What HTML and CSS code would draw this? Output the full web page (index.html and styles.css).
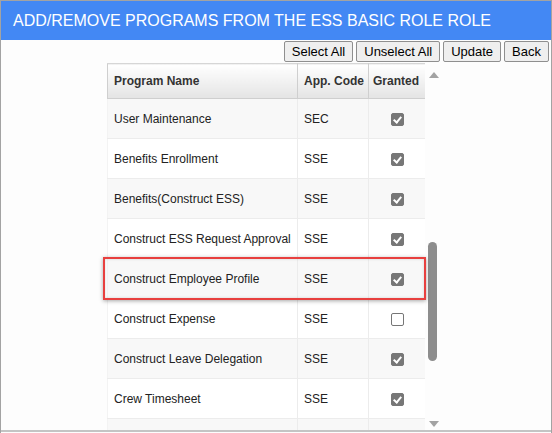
FILE: index.html
```html
<!DOCTYPE html>
<html>
<head>
<meta charset="utf-8">
<link rel="stylesheet" href="styles.css">
</head>
<body>
<div class="frame">
  <div class="titlebar">ADD/REMOVE PROGRAMS FROM THE ESS BASIC ROLE ROLE</div>
  <div class="toolbar">
    <button class="btn">Select All</button>
    <button class="btn">Unselect All</button>
    <button class="btn">Update</button>
    <button class="btn">Back</button>
  </div>
  <div class="gridwrap">
    <div class="grid">
      <table class="tbl">
        <thead>
          <tr><th class="c1">Program Name</th><th class="c2">App. Code</th><th class="c3">Granted</th></tr>
        </thead>
        <tbody>
          <tr><td>User Maintenance</td><td>SEC</td><td class="cb"><span class="box on"></span></td></tr>
          <tr><td>Benefits Enrollment</td><td>SSE</td><td class="cb"><span class="box on"></span></td></tr>
          <tr><td>Benefits(Construct ESS)</td><td>SSE</td><td class="cb"><span class="box on"></span></td></tr>
          <tr><td>Construct ESS Request Approval</td><td>SSE</td><td class="cb"><span class="box on"></span></td></tr>
          <tr><td>Construct Employee Profile</td><td>SSE</td><td class="cb"><span class="box on"></span></td></tr>
          <tr><td>Construct Expense</td><td>SSE</td><td class="cb"><span class="box"></span></td></tr>
          <tr><td>Construct Leave Delegation</td><td>SSE</td><td class="cb"><span class="box on"></span></td></tr>
          <tr><td>Crew Timesheet</td><td>SSE</td><td class="cb"><span class="box on"></span></td></tr>
          <tr><td></td><td></td><td class="cb"></td></tr>
        </tbody>
      </table>
    </div>
    <div class="scrollbar">
      <span class="arrow up"></span>
      <span class="thumb"></span>
      <span class="arrow down"></span>
    </div>
  </div>
  <div class="highlight"></div>
</div>
</body>
</html>
```
FILE: styles.css
```css
* { box-sizing: border-box; }
html, body { margin: 0; padding: 0; background: #fff; }
body { font-family: "Liberation Sans", Arial, sans-serif; }

.frame {
  position: relative;
  width: 552px;
  height: 433px;
  border: 1px solid #a3a3a3;
  border-bottom: none;
  background: #fdfdfd;
  overflow: hidden;
  display: flex;
  flex-direction: column;
}

.titlebar {
  height: 39px;
  background: #4388f4;
  color: #fff;
  font-size: 16px;
  line-height: 39px;
  padding-left: 12px;
  white-space: nowrap;
  flex: none;
}

.toolbar {
  display: flex;
  justify-content: flex-end;
  gap: 3px;
  padding: 1px 2px 0 0;
  height: 23px;
  flex: none;
}

.btn {
  font-family: "Liberation Sans", Arial, sans-serif;
  font-size: 13px;
  color: #000;
  height: 21px;
  padding: 0 7px;
  background: #efefef;
  border: 1px solid #8f8f8f;
  border-radius: 2px;
  line-height: 19px;
}

.gridwrap {
  display: flex;
  flex: 1;
  min-height: 0;
  padding-left: 106px;
  border-bottom: 2px solid #c4c4c4;
  margin-bottom: 1px;
}

.grid {
  width: 318px;
  overflow: hidden;
}

.tbl {
  width: 318px;
  border-collapse: collapse;
  table-layout: fixed;
  font-size: 12px;
  color: #222;
}

.tbl th {
  height: 35px;
  font-weight: bold;
  text-align: left;
  padding: 0 4px 0 6px;
  color: #333;
  white-space: nowrap;
  background: linear-gradient(#ffffff, #e4e4e4);
  border: 1px solid #cfcfcf;
  border-top: 1px solid #d6d6d6;
}
.tbl th.c1 { width: 190px; }
.tbl th.c2 { width: 71px; }
.tbl th.c3 { width: 57px; padding: 0 4px; }

.tbl td {
  height: 40px;
  padding: 0 6px;
  border-right: 1px solid #ececec;
  border-bottom: 1px solid #ececec;
  white-space: nowrap;
  overflow: hidden;
}
.tbl td:first-child { border-left: 1px solid #f3f3f3; }
.tbl tbody tr:nth-child(odd) td { background: #f8f8f8; }
.tbl tbody tr:nth-child(even) td { background: #ffffff; }

.tbl td.cb { text-align: center; padding: 0; }

.box {
  display: inline-block;
  width: 13px;
  height: 13px;
  border: 1px solid #767676;
  border-radius: 2px;
  background: #fff;
  vertical-align: middle;
  position: relative;
  margin-left: 1px;
}
.box.on {
  background: #777;
  border-color: #777;
}
.box.on::after {
  content: "";
  position: absolute;
  left: 3px;
  top: 1px;
  width: 3px;
  height: 6px;
  border: solid #fff;
  border-width: 0 2px 2px 0;
  transform: rotate(40deg);
}

.scrollbar {
  position: relative;
  width: 17px;
  flex: none;
}
.arrow {
  position: absolute;
  left: 4px;
  width: 0;
  height: 0;
  border-left: 5px solid transparent;
  border-right: 5px solid transparent;
}
.arrow.up { top: 9px; border-bottom: 6px solid #a3a3a3; }
.arrow.down { bottom: 3px; border-top: 6px solid #a3a3a3; }
.thumb {
  position: absolute;
  left: 3px;
  top: 179px;
  width: 9px;
  height: 119px;
  border-radius: 5px;
  background: #8d8d8d;
}

.highlight {
  position: absolute;
  left: 102px;
  top: 256px;
  width: 323px;
  height: 43px;
  border: 2px solid #e8403f;
  box-shadow: 0 1px 4px rgba(0,0,0,0.35), inset 0 0 3px rgba(0,0,0,0.15);
}
```
